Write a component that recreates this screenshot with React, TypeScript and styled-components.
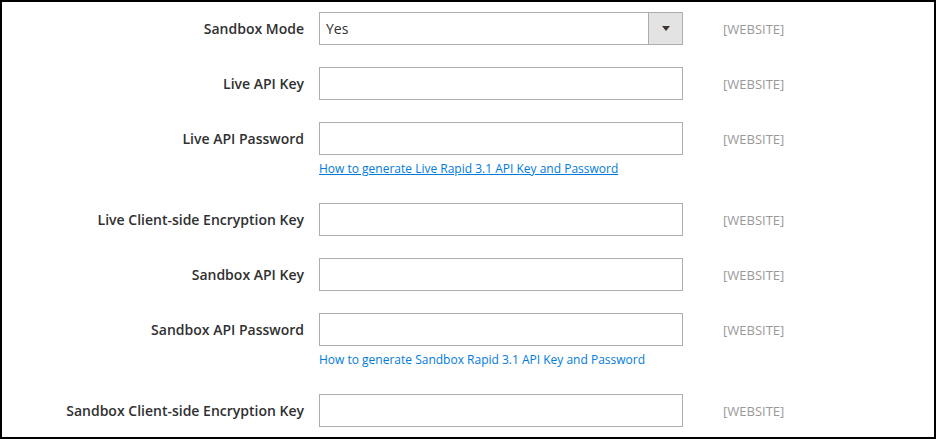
import React from "react";
import styled, { createGlobalStyle } from "styled-components";

const Global = createGlobalStyle`
  html, body { margin: 0; padding: 0; background: #fff; }
  body { font-family: "Open Sans", "Liberation Sans", sans-serif; }
  * { box-sizing: border-box; }
`;

const Frame = styled.div`
  width: 936px;
  height: 439px;
  border: 2px solid #000;
  background: #fff;
  padding: 10px 0 10px 0;
  display: flex;
  flex-direction: column;
  gap: 22px;
  overflow: hidden;
`;

const Row = styled.div`
  display: grid;
  grid-template-columns: 302px 364px 1fr;
  column-gap: 15px;
  align-items: start;
`;

const Label = styled.label`
  height: 33px;
  display: flex;
  align-items: center;
  justify-content: flex-end;
  font-size: 14px;
  font-weight: 600;
  color: #303030;
  white-space: nowrap;
`;

const Control = styled.div`
  display: flex;
  flex-direction: column;
`;

const Input = styled.input`
  width: 364px;
  height: 33px;
  border: 1px solid #adadad;
  background: #fff;
  padding: 0 6px;
  font-family: inherit;
  font-size: 14px;
  color: #303030;
  outline: none;
  margin: 0;
`;

const Select = styled.div`
  width: 364px;
  height: 33px;
  border: 1px solid #adadad;
  background: #fff;
  display: flex;
  align-items: stretch;
`;

const SelectValue = styled.span`
  flex: 1;
  display: flex;
  align-items: center;
  padding-left: 6px;
  font-size: 14px;
  color: #303030;
`;

const SelectArrow = styled.span`
  width: 34px;
  background: #e3e3e3;
  border-left: 1px solid #adadad;
  display: flex;
  align-items: center;
  justify-content: center;
`;

const Note = styled.a<{ $underline?: boolean }>`
  display: block;
  margin-top: 5px;
  padding-bottom: 3px;
  line-height: 18px;
  font-size: 12px;
  color: #007bdb;
  text-decoration: ${(p) => (p.$underline ? "underline" : "none")};
  white-space: nowrap;
`;

const Scope = styled.span`
  height: 33px;
  display: flex;
  align-items: center;
  padding-top: 1px;
  margin-left: 25px;
  font-size: 13px;
  color: #999;
`;

type Field = {
  label: string;
  select?: string;
  note?: string;
  underline?: boolean;
};

const fields: Field[] = [
  { label: "Sandbox Mode", select: "Yes" },
  { label: "Live API Key" },
  {
    label: "Live API Password",
    note: "How to generate Live Rapid 3.1 API Key and Password",
    underline: true,
  },
  { label: "Live Client-side Encryption Key" },
  { label: "Sandbox API Key" },
  {
    label: "Sandbox API Password",
    note: "How to generate Sandbox Rapid 3.1 API Key and Password",
  },
  { label: "Sandbox Client-side Encryption Key" },
];

export default function App() {
  return (
    <>
      <Global />
      <Frame>
        {fields.map((f) => (
          <Row key={f.label}>
            <Label>{f.label}</Label>
            <Control>
              {f.select ? (
                <Select>
                  <SelectValue>{f.select}</SelectValue>
                  <SelectArrow>
                    <svg width="8" height="5" viewBox="0 0 8 5">
                      <path d="M0 0 H8 L4 5 Z" fill="#41362f" />
                    </svg>
                  </SelectArrow>
                </Select>
              ) : (
                <Input type="text" />
              )}
              {f.note && (
                <Note href="#" $underline={f.underline}>
                  {f.note}
                </Note>
              )}
            </Control>
            <Scope>[WEBSITE]</Scope>
          </Row>
        ))}
      </Frame>
    </>
  );
}
